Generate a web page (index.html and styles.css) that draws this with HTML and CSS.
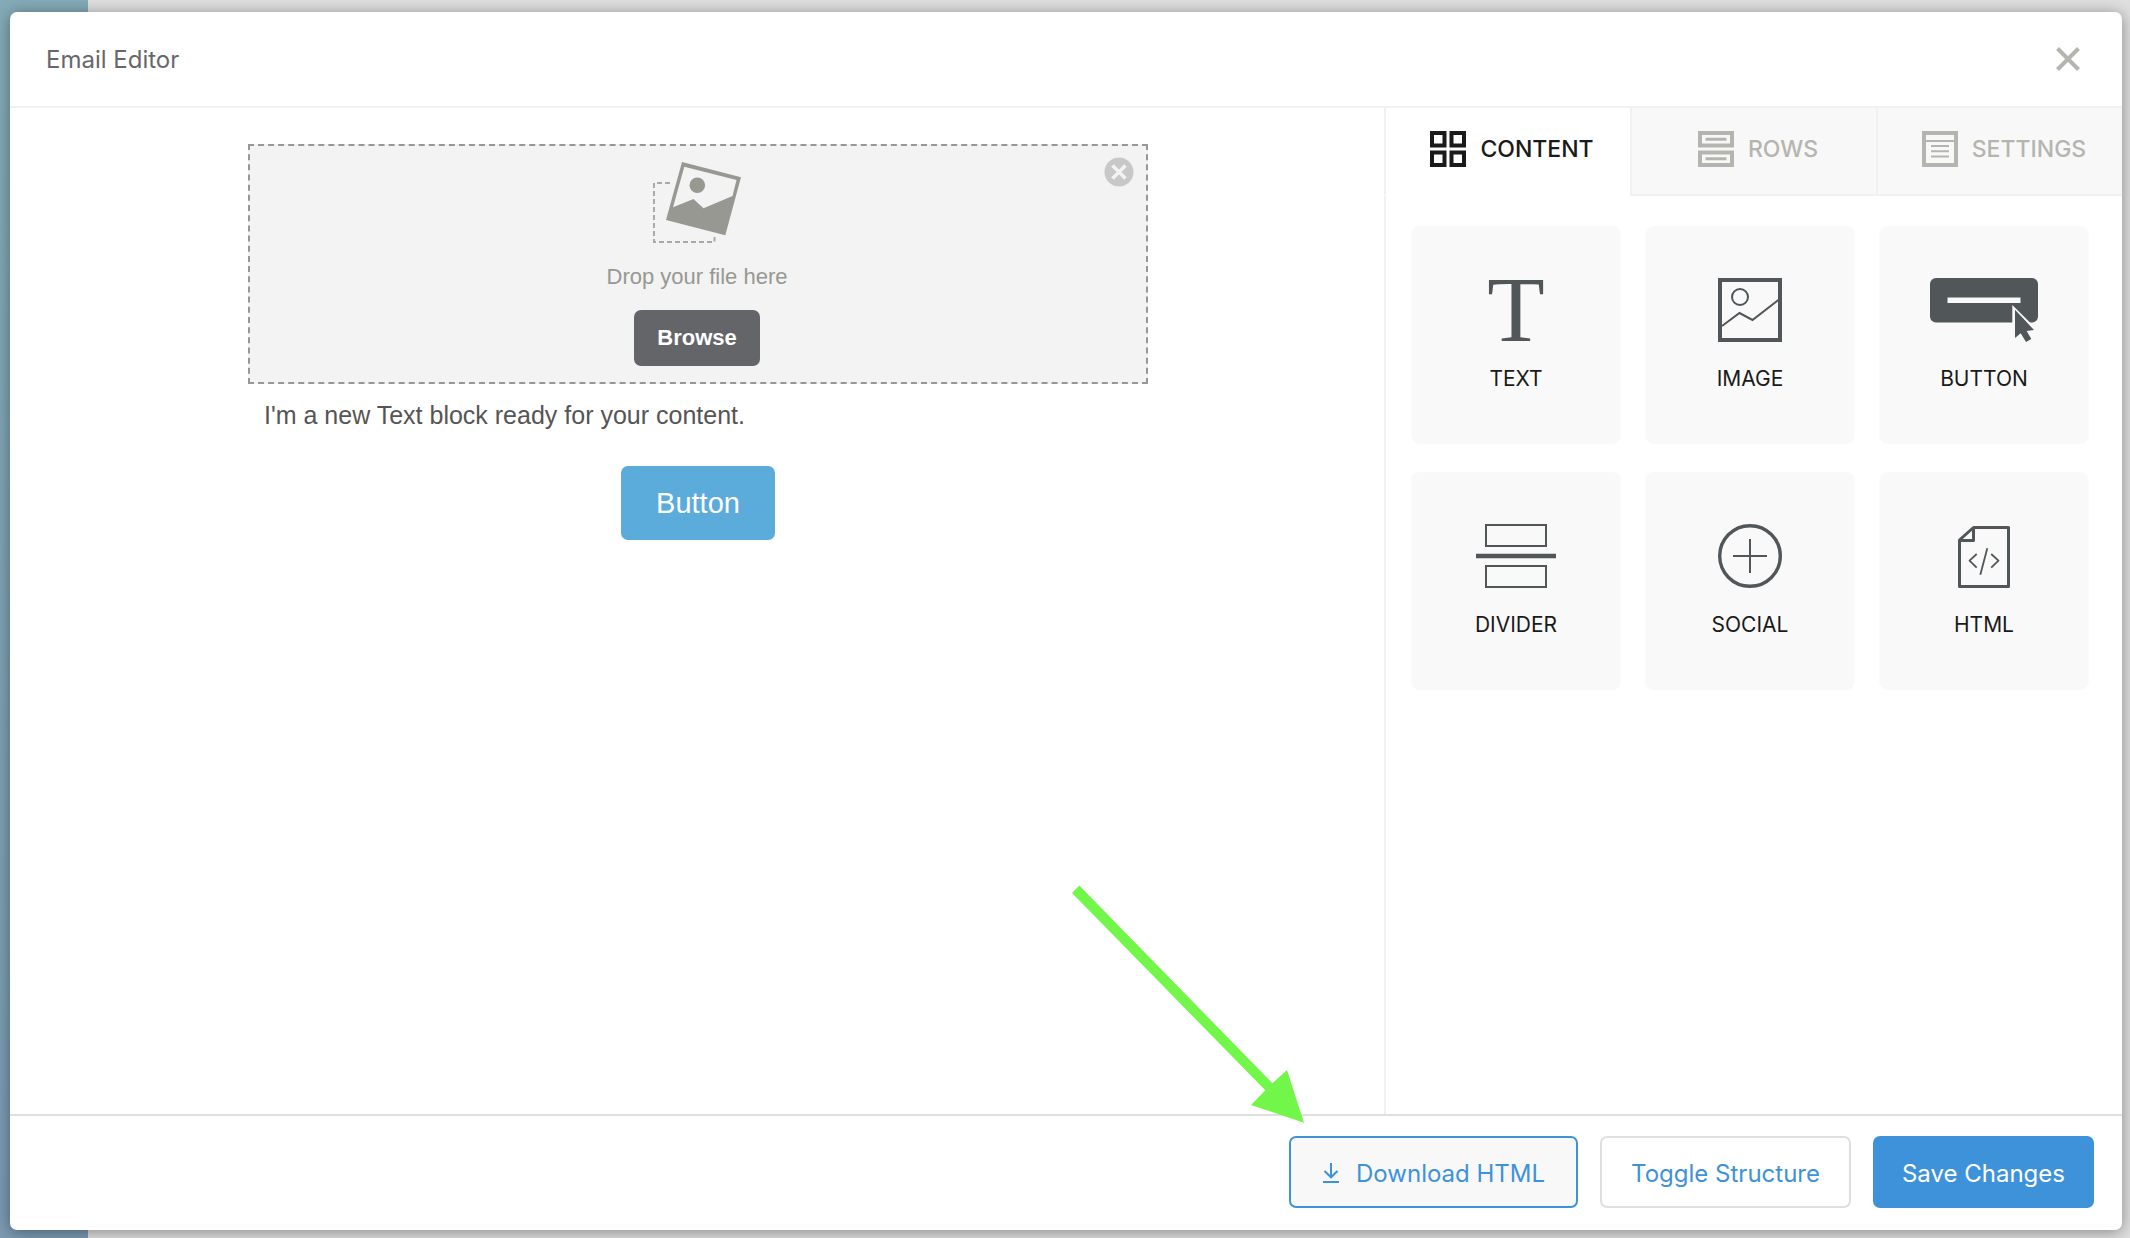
FILE: index.html
```html
<!DOCTYPE html>
<html lang="en">
<head>
    <meta charset="UTF-8">
    <meta name="viewport" content="width=device-width, initial-scale=1.0">
    <title>Email Editor</title>
    <link rel="stylesheet" href="styles.css">
</head>
<body>
    <div class="modal">
        <header class="modal-header">
            <h1>Email Editor</h1>
            <button class="close-btn" type="button" aria-label="Close">
                <svg width="24" height="24" viewBox="0 0 24 24"><path d="M1.500 1.500L22.500 22.500M22.500 1.500L1.500 22.500" fill="none" stroke="currentColor" stroke-width="4"/></svg>
            </button>
        </header>

        <div class="modal-body">
            <main class="canvas">
                <div class="email">
                    <div class="dropzone">
                        <button class="remove-btn" type="button" aria-label="Remove image">
                            <svg width="30" height="30" viewBox="0 0 30 30"><circle cx="15" cy="15" r="14.5" fill="#c8c8c8"/><path d="M8.500 8.500L21.500 21.500M21.500 8.500L8.500 21.500" fill="none" stroke="#f3f3f3" stroke-width="3.500"/></svg>
                        </button>
                        <svg class="drop-icon" width="88" height="82" viewBox="0 0 88 82">
                            <path d="M17 21H1V80H61.500V75" fill="none" stroke="#a9a9a5" stroke-width="2" stroke-dasharray="5 3"/>
                            <path d="M29 0L88 15.300L72.300 73.300L13 58Z" fill="#979892"/>
                            <path d="M31.300 4.700L83.500 18L79.500 34L50.500 46.300L40.500 37L20 45.300Z" fill="#f3f3f3"/>
                            <circle cx="44.300" cy="23.300" r="7.800" fill="#979892"/>
                        </svg>
                        <p>Drop your file here</p>
                        <button class="browse-btn" type="button">Browse</button>
                    </div>
                    <p class="text-block">I'm a new Text block ready for your content.</p>
                    <a class="email-btn" href="#">Button</a>
                </div>
            </main>

            <aside class="sidebar">
                <nav class="tabs">
                    <button class="tab active" type="button">
                        <svg width="36" height="36" viewBox="0 0 36 36" fill="none" stroke="currentColor" stroke-width="4"><path d="M2 2H14.500V14.500H2ZM21.500 2H34V14.500H21.500ZM2 21.500H14.500V34H2ZM21.500 21.500H34V34H21.500Z"/></svg>
                        CONTENT
                    </button>
                    <button class="tab" type="button">
                        <svg width="36" height="36" viewBox="0 0 36 36" fill="none" stroke="currentColor" stroke-width="4"><path d="M2 2H34V14.500H2ZM2 21.500H34V34H2Z"/><path d="M7.500 8.200H28.500M7.500 27.700H28.500" stroke-width="3"/></svg>
                        ROWS
                    </button>
                    <button class="tab" type="button">
                        <svg width="36" height="36" viewBox="0 0 36 36" fill="none" stroke="currentColor" stroke-width="4"><path d="M2 2H34V34H2Z"/><path d="M3 10H33M9 15H27M9 20.300H27M9 25.500H27" stroke-width="2"/></svg>
                        SETTINGS
                    </button>
                </nav>

                <div class="tiles">
                    <button class="tile" type="button">
                        <svg width="108" height="64" viewBox="0 0 108 64" aria-hidden="true"><text class="serif-t" x="54" y="63" text-anchor="middle">T</text></svg>
                        TEXT
                    </button>
                    <button class="tile" type="button">
                        <svg width="108" height="64" viewBox="0 0 108 64" fill="none" stroke="currentColor" stroke-width="2"><rect x="24" y="2" width="60" height="60" stroke-width="4"/><circle cx="44" cy="19" r="8"/><path d="M26 48L43.500 35L56.500 42L83 21.500"/></svg>
                        IMAGE
                    </button>
                    <button class="tile" type="button">
                        <svg width="108" height="64" viewBox="0 0 108 64"><rect width="108" height="44.500" rx="6" fill="currentColor"/><path d="M17.500 19.500H90.500V25H17.500ZM82.300 27V62H85V32L104 52V48.500Z" fill="#f9f9f9"/><path d="M85 32L104 52L96.700 53L101.300 61L96 64L90.700 55.300L85 60Z" fill="currentColor"/></svg>
                        BUTTON
                    </button>
                    <button class="tile" type="button">
                        <svg width="108" height="64" viewBox="0 0 108 64" fill="none" stroke="currentColor" stroke-width="2"><rect x="24" y="1" width="60" height="21"/><rect x="24" y="42" width="60" height="21"/><path d="M14 32H94" stroke-width="4.500"/></svg>
                        DIVIDER
                    </button>
                    <button class="tile" type="button">
                        <svg width="108" height="64" viewBox="0 0 108 64" fill="none" stroke="currentColor" stroke-width="2"><circle cx="54" cy="32" r="30.300" stroke-width="3.400"/><path d="M54 15V49M37 32H71"/></svg>
                        SOCIAL
                    </button>
                    <button class="tile" type="button">
                        <svg width="108" height="64" viewBox="0 0 108 64" fill="none" stroke="currentColor" stroke-width="2" stroke-linejoin="round"><path d="M43.500 3.500H78.500V62.500H29.500V16ZV16.500H29.500" stroke-width="3"/><path d="M46.700 30L39.500 36.700L46.700 43.700M61.200 30L68.500 36.700L61.200 43.700M57.300 24.300L50.300 50.700" stroke-width="1.800"/></svg>
                        HTML
                    </button>
                </div>
            </aside>
        </div>

        <footer class="modal-footer">
            <div class="download">
                <button class="btn btn-active" type="button">
                    <svg width="18" height="22" viewBox="0 0 18 22" fill="none" stroke="currentColor" stroke-width="2"><path d="M9 1V15M2.500 9L9 15.300L15.500 9M1 20H17"/></svg>
                    Download HTML
                </button>
                <svg class="arrow" width="232" height="238" viewBox="0 0 232 238"><path d="M0 8L7.300 0.500L200.500 198.300L215 185L232 237.700L179 220L193.300 205.300Z" fill="#72f64a"/></svg>
            </div>
            <button class="btn" type="button">Toggle Structure</button>
            <button class="btn btn-primary" type="button">Save Changes</button>
        </footer>
    </div>
</body>
</html>
```
FILE: styles.css
```css
* {
    box-sizing: border-box;
}
body {
    margin: 0;
    padding: 12px 8px 8px 10px;
    display: flex;
    min-height: 100vh;
    background: linear-gradient(#84abb8, #7b9ab2) 0 0 / 88px 100% no-repeat #dfdfdf;
    font-family: Inter, sans-serif;
    font-size: 24px;
    color: #67676b;
}
h1, p {
    margin: 0;
    font-weight: normal;
}
svg {
    display: block;
    flex: none;
}
button {
    font: inherit;
    color: inherit;
    background: none;
    border: none;
    padding: 0;
    cursor: pointer;
}
.modal {
    flex: 1;
    display: flex;
    flex-direction: column;
    background: #fff;
    border-radius: 7px;
    box-shadow: 0 2px 16px rgba(0, 0, 0, 0.4);
}
.modal-header {
    display: flex;
    align-items: center;
    justify-content: space-between;
    height: 96px;
    padding: 0 42px 0 36px;
    border-bottom: 2px solid #f1f1f1;
}
.modal-header h1 {
    font-size: 24px;
}
.close-btn {
    color: #b5b5b0;
}
.modal-body {
    flex: 1;
    display: flex;
}

/* email canvas */
.canvas {
    flex: 1;
    padding: 36px 24px 0 26px;
    font-family: "Liberation Sans", Arial, sans-serif;
}
.email {
    display: flex;
    flex-direction: column;
    align-items: center;
    max-width: 900px;
    margin: 0 auto;
}
.dropzone {
    position: relative;
    align-self: stretch;
    display: flex;
    flex-direction: column;
    align-items: center;
    padding: 16px 18px 16px 16px;
    background: #f3f3f3;
    border: 2px dashed #979797;
    font-size: 22px;
    line-height: 26px;
    color: #979892;
}
.dropzone p {
    margin: 20px 0 20px;
}
.remove-btn {
    position: absolute;
    top: 11px;
    right: 12px;
}
.browse-btn {
    padding: 15px 23px;
    background: #646569;
    border-radius: 7px;
    color: #fff;
    font-weight: bold;
}
.text-block {
    align-self: stretch;
    padding: 16px 16px 36px;
    font-size: 25px;
    line-height: 30px;
    color: #555;
}
.email-btn {
    padding: 20px 35px;
    background: #5babdb;
    border-radius: 7px;
    color: #fff;
    font-size: 29px;
    line-height: 34px;
    text-decoration: none;
}

/* sidebar */
.sidebar {
    width: 738px;
    border-left: 2px solid #f1f1f1;
}
.tabs {
    display: flex;
    height: 88px;
    margin-left: -2px;
}
.tab {
    flex: 1;
    display: flex;
    align-items: center;
    justify-content: center;
    gap: 14px;
    padding: 0 0 4px 8px;
    background: #f8f8f8;
    border-left: 2px solid #f1f1f1;
    border-bottom: 2px solid #f1f1f1;
    font-size: 23px;
    font-weight: 500;
    color: #b5b5b0;
}
.tab.active {
    background: #fff;
    border-bottom-color: #fff;
    color: #1a1a1a;
}
.tiles {
    display: grid;
    grid-template-columns: repeat(3, 1fr);
    gap: 30px 26px;
    padding: 30px 34px 30px 26px;
}
.tile {
    display: flex;
    flex-direction: column;
    align-items: center;
    gap: 24px;
    padding: 52px 0 50px;
    background: #f9f9f9;
    border-radius: 8px;
    box-shadow: 0 1px 3px rgba(0, 0, 0, 0.05);
    font-size: 21px;
    line-height: 26px;
    color: #1a1a1a;
}
.tile svg {
    color: #515659;
    overflow: visible;
}
.serif-t {
    font-family: "Liberation Serif", serif;
    font-size: 94px;
    fill: #515659;
}

/* footer */
.modal-footer {
    display: flex;
    justify-content: flex-end;
    gap: 22px;
    padding: 20px 28px 22px;
    border-top: 2px solid #dfdfdf;
}
.download {
    position: relative;
}
.btn {
    display: flex;
    align-items: center;
    gap: 16px;
    height: 72px;
    padding: 2px 29px 0;
    background: #fff;
    border: 2px solid #dfdfdf;
    border-radius: 7px;
    color: #3e92d9;
}
.btn-active {
    padding: 2px 31px 0;
    background: #f8f8f8;
    border-color: #3e92d9;
}
.btn-primary {
    padding: 2px 27px 0;
    background: #3e92d9;
    border-color: #3e92d9;
    color: #fff;
}
.arrow {
    position: absolute;
    left: -217px;
    bottom: 85px;
    pointer-events: none;
}
```
